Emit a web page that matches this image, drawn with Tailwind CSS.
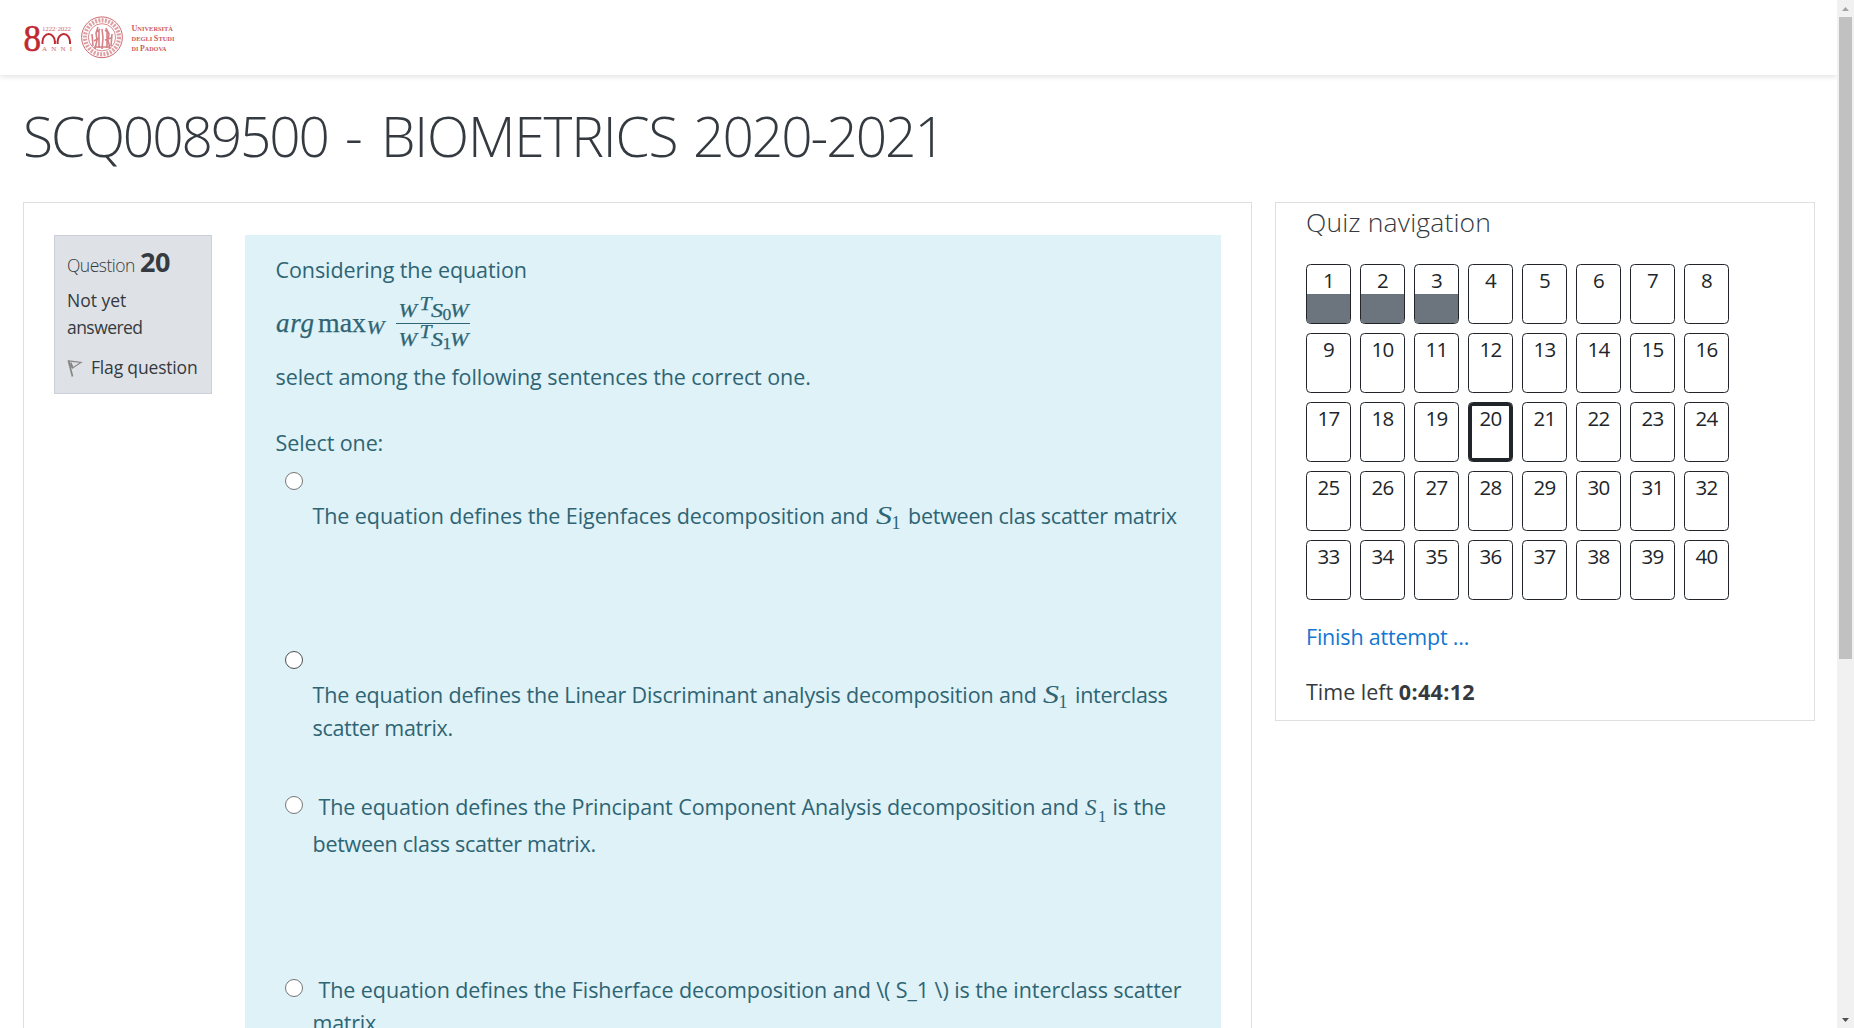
<!DOCTYPE html>
<html lang="en">
<head>
<meta charset="utf-8">
<title>SCQ0089500 - BIOMETRICS 2020-2021</title>
<script src="https://cdn.jsdelivr.net/npm/@tailwindcss/browser@4"></script>
</head>
<body class="flex h-[1028px] w-[1854px] overflow-hidden bg-white font-['Open_Sans',sans-serif] text-[21.5px] leading-[34px] text-[#343a40]">
<div class="h-[1028px] w-[1837px] overflow-hidden">
  <header class="h-[75px] bg-white shadow-[0_2px_5px_rgba(0,0,0,0.11)]">
    <svg class="block h-[75px] w-[200px]" viewBox="0 0 200 75" font-family="Liberation Serif, serif" fill="#c0282f">
      <text x="23.500" y="50.500" font-size="37" stroke="#c0282f" stroke-width=".6" textLength="17.500" lengthAdjust="spacingAndGlyphs">8</text>
      <g fill="none" stroke="#c0282f" stroke-width="2">
        <path d="M42.500 44v-2.500a6.200 7.400 0 0 1 12.400 0V44M57.600 44v-2.500a6.200 7.400 0 0 1 12.400 0V44"/>
      </g>
      <g fill="#cf6a70">
        <text x="42" y="31" font-size="7" textLength="29">1222·2022</text>
        <text x="42" y="50.500" font-size="7" textLength="30">ANNI</text>
      </g>
      <g fill="none" stroke="#cd6a70">
        <circle cx="102" cy="37.3" r="20.4" stroke-width="1"/>
        <circle cx="102" cy="37.3" r="17" stroke-width="4.2" stroke-dasharray="2 1.3" stroke="#dda0a4"/>
        <circle cx="102" cy="37.3" r="13.6" stroke-width=".8"/>
        <path stroke-width="1.6" stroke="#d58388" d="M98 27l-2 6 1 7-2 9M99 30v18M102 29l1 9-1 11M106 28l3 6-1 6 2 9M107 31v17M92 34l1 12M112 34l-1 12M94 47h16M97 32l3-3M105 30l4 3M94 41l5-3M105 40l6-2"/>
      </g>
      <g fill="#cb5a61" font-weight="700">
        <text x="131.500" y="31.300" font-size="8.600" textLength="41.500" lengthAdjust="spacingAndGlyphs">U<tspan font-size="6.800">NIVERSITÀ</tspan></text>
        <text x="131.500" y="41" font-size="8.600" textLength="43" lengthAdjust="spacingAndGlyphs"><tspan font-size="6.800">DEGLI </tspan>S<tspan font-size="6.800">TUDI</tspan></text>
        <text x="131.500" y="50.600" font-size="8.600" textLength="35" lengthAdjust="spacingAndGlyphs"><tspan font-size="6.800">DI </tspan>P<tspan font-size="6.800">ADOVA</tspan></text>
      </g>
    </svg>
  </header>

  <h1 class="mt-[27px] ml-[23px] flex text-[55px] leading-[68px] font-light whitespace-nowrap"><span class="w-[322px] tracking-[-2.1px]">SCQ0089500 </span><span class="w-[36px]">- </span><span class="w-[312px] tracking-[-1.15px]">BIOMETRICS </span><span class="tracking-[-2px]">2020-2021</span></h1>

  <div class="mt-8 ml-[23px] flex items-start gap-[23px]">
    <main class="flex h-[900px] w-[1229px] shrink-0 items-start gap-[33px] border border-[#dfdfdf] pt-8 pl-[30px]">
      <section class="h-[159px] w-[158px] shrink-0 border border-[#cacfd9] bg-[#dee2e6] pt-2 pl-3 text-[17.5px] leading-[27px]">
        <h3 class="flex h-9 items-baseline gap-[5px] leading-9"><span class="font-light tracking-[-0.5px]">Question</span><span class="text-[27px] font-bold tracking-[-0.2px]">20</span></h3>
        <div class="mt-[7px]">Not yet</div>
        <div class="tracking-[-0.55px]">answered</div>
        <div class="mt-[13px] flex whitespace-nowrap">
          <svg class="mt-[5px] mr-2 h-[18px] w-4" viewBox="0 0 16 18" fill="none" stroke="#868686"><path stroke-width="1.700" d="M1.500 2L5.500 17.500"/><path stroke-width="1.200" d="M1.500 1.800l12.500 1.700-8.700 5.700zM4 3.500l2 5.500"/></svg>
          <span class="tracking-[-0.17px]">Flag question</span>
        </div>
      </section>

      <section class="h-[860px] w-[976px] shrink-0 bg-[#def2f8] pt-[18px] pl-[30.5px] whitespace-nowrap text-[#2f6473]">
        <p class="tracking-[-0.08px]">Considering the equation</p>
        <svg class="block h-[73px] w-[220px]" viewBox="276 287 220 73" font-family="Liberation Serif, serif" fill="#2f6473" stroke="#2f6473" stroke-width=".25">
          <g font-style="italic">
            <text x="276" y="331.500" font-size="27" textLength="38">arg</text>
            <text x="366.500" y="334" font-size="18.500" textLength="18" lengthAdjust="spacingAndGlyphs">W</text>
            <text x="398.500" y="317" font-size="19.500" textLength="18.500" lengthAdjust="spacingAndGlyphs">W</text>
            <text x="419.500" y="310" font-size="18" textLength="12" lengthAdjust="spacingAndGlyphs">T</text>
            <text x="431" y="317" font-size="19.500" textLength="12" lengthAdjust="spacingAndGlyphs">S</text>
            <text x="450" y="317" font-size="19.500" textLength="18.500" lengthAdjust="spacingAndGlyphs">W</text>
            <text x="398.500" y="346" font-size="19.500" textLength="18.500" lengthAdjust="spacingAndGlyphs">W</text>
            <text x="419.500" y="338" font-size="18" textLength="12" lengthAdjust="spacingAndGlyphs">T</text>
            <text x="431" y="346" font-size="19.500" textLength="12" lengthAdjust="spacingAndGlyphs">S</text>
            <text x="450" y="346" font-size="19.500" textLength="18.500" lengthAdjust="spacingAndGlyphs">W</text>
          </g>
          <text x="318" y="331.500" font-size="27" textLength="48" lengthAdjust="spacingAndGlyphs">max</text>
          <text x="442.500" y="320" font-size="17.500">0</text>
          <text x="442.500" y="349" font-size="17.500">1</text>
          <path stroke="none" d="M396 323h74v1h-74z"/>
        </svg>
        <p class="tracking-[-0.07px]">select among the following sentences the correct one.</p>
        <p class="mt-8 tracking-[-0.1px]">Select one:</p>

        <div class="flex h-[178px]">
          <span class="mt-3 mr-[10px] ml-[9px] size-[18px] rounded-full border border-[#767676] bg-white"></span>
          <div class="flex pt-[39px]">
            <span class="w-[563px] tracking-[-0.08px]">The equation defines the Eigenfaces decomposition and</span>
            <svg class="h-[34px] w-[32.5px]" viewBox="0 0 32.500 34" font-family="Liberation Serif, serif" fill="#2f6473"><text x="0" y="25" font-size="25.500" font-style="italic" textLength="16" lengthAdjust="spacingAndGlyphs">S</text><text x="15.500" y="30" font-size="18">1</text></svg>
            <span class="tracking-[-0.24px]">between clas scatter matrix</span>
          </div>
        </div>

        <div class="flex h-[151px]">
          <span class="mt-[13px] mr-[10px] ml-[9px] size-[18px] rounded-full border border-[#4f4f4f] bg-white"></span>
          <div class="pt-10">
            <div class="flex">
              <span class="w-[730px] tracking-[-0.14px]">The equation defines the Linear Discriminant analysis decomposition and</span>
              <svg class="h-[34px] w-[32.5px]" viewBox="0 0 32.500 34" font-family="Liberation Serif, serif" fill="#2f6473"><text x="0" y="25" font-size="25.500" font-style="italic" textLength="16" lengthAdjust="spacingAndGlyphs">S</text><text x="15.500" y="30" font-size="18">1</text></svg>
              <span class="tracking-[-0.28px]">interclass</span>
            </div>
            <div class="-mt-px tracking-[-0.3px]">scatter matrix.</div>
          </div>
        </div>

        <div class="flex h-[183px]">
          <span class="mt-[7px] mr-[10px] ml-[9px] size-[18px] rounded-full border border-[#767676] bg-white"></span>
          <div class="pt-px">
            <div class="flex pl-1.5">
              <span class="w-[766px] tracking-[-0.09px]">The equation defines the Principant Component Analysis decomposition and</span>
              <svg class="h-[34px] w-[28px] overflow-visible" viewBox="0 0 28 34" font-family="Liberation Serif, serif" fill="#2f6473"><text x="0" y="25" font-size="23" font-style="italic">S</text><text x="13" y="31.500" font-size="16.500">1</text></svg>
              <span class="tracking-[-0.1px]">is the</span>
            </div>
            <div class="mt-[3px] tracking-[-0.27px]">between class scatter matrix.</div>
          </div>
        </div>

        <div class="flex">
          <span class="mt-[7px] mr-[10px] ml-[9px] size-[18px] rounded-full border border-[#767676] bg-white"></span>
          <div class="pt-px">
            <div class="pl-1.5 tracking-[-0.08px]">The equation defines the Fisherface decomposition and \( S_1 \) is the interclass scatter</div>
            <div class="-mt-px tracking-[-0.25px]">matrix.</div>
          </div>
        </div>
      </section>
    </main>

    <aside class="h-[519px] w-[540px] shrink-0 border border-[#dfdfdf] pt-px pl-[30px]">
      <h2 class="text-[26.5px] leading-9 font-light tracking-[0.16px]">Quiz navigation</h2>
      <nav id="quiz-buttons" class="mt-6 grid grid-cols-[repeat(8,45px)] gap-[9px] text-center text-[20.5px] leading-[30px] tracking-[-0.7px] text-[#212529]"></nav>
      <p class="mt-5 tracking-[-0.2px]"><a class="text-[#1177d1]">Finish attempt ...</a></p>
      <p class="mt-[21px]"><span>Time left</span> <b class="font-bold tracking-[0.35px]">0:44:12</b></p>
    </aside>
  </div>
</div>

<!-- page scrollbar -->
<div class="flex h-[1028px] w-[17px] flex-col items-center justify-between bg-[#f1f1f1]">
  <svg class="h-[17px] w-[17px]" viewBox="0 0 17 17" fill="#a3a3a3"><path d="M5 11h7L8.500 7z"/></svg>
  <div class="mb-auto h-[642px] w-[13px] bg-[#c1c1c1]"></div>
  <svg class="h-[17px] w-[17px]" viewBox="0 0 17 17" fill="#505050"><path d="M5 7h7l-3.500 4z"/></svg>
</div>

<script>
  const nav = document.getElementById('quiz-buttons');
  for (let n = 1; n <= 40; n++) {
    const b = document.createElement('a');
    b.className = 'flex h-[60px] flex-col overflow-hidden rounded-[4.5px] border border-[#212529]';
    if (n === 20) b.className += ' shadow-[inset_0_0_0_3px_#212529]';
    b.innerHTML = n <= 3 ? `<span class="h-[29px]">${n}</span><span class="flex-1 bg-[#6c757d]"></span>` : `<span>${n}</span>`;
    nav.append(b);
  }
</script>
</body>
</html>
